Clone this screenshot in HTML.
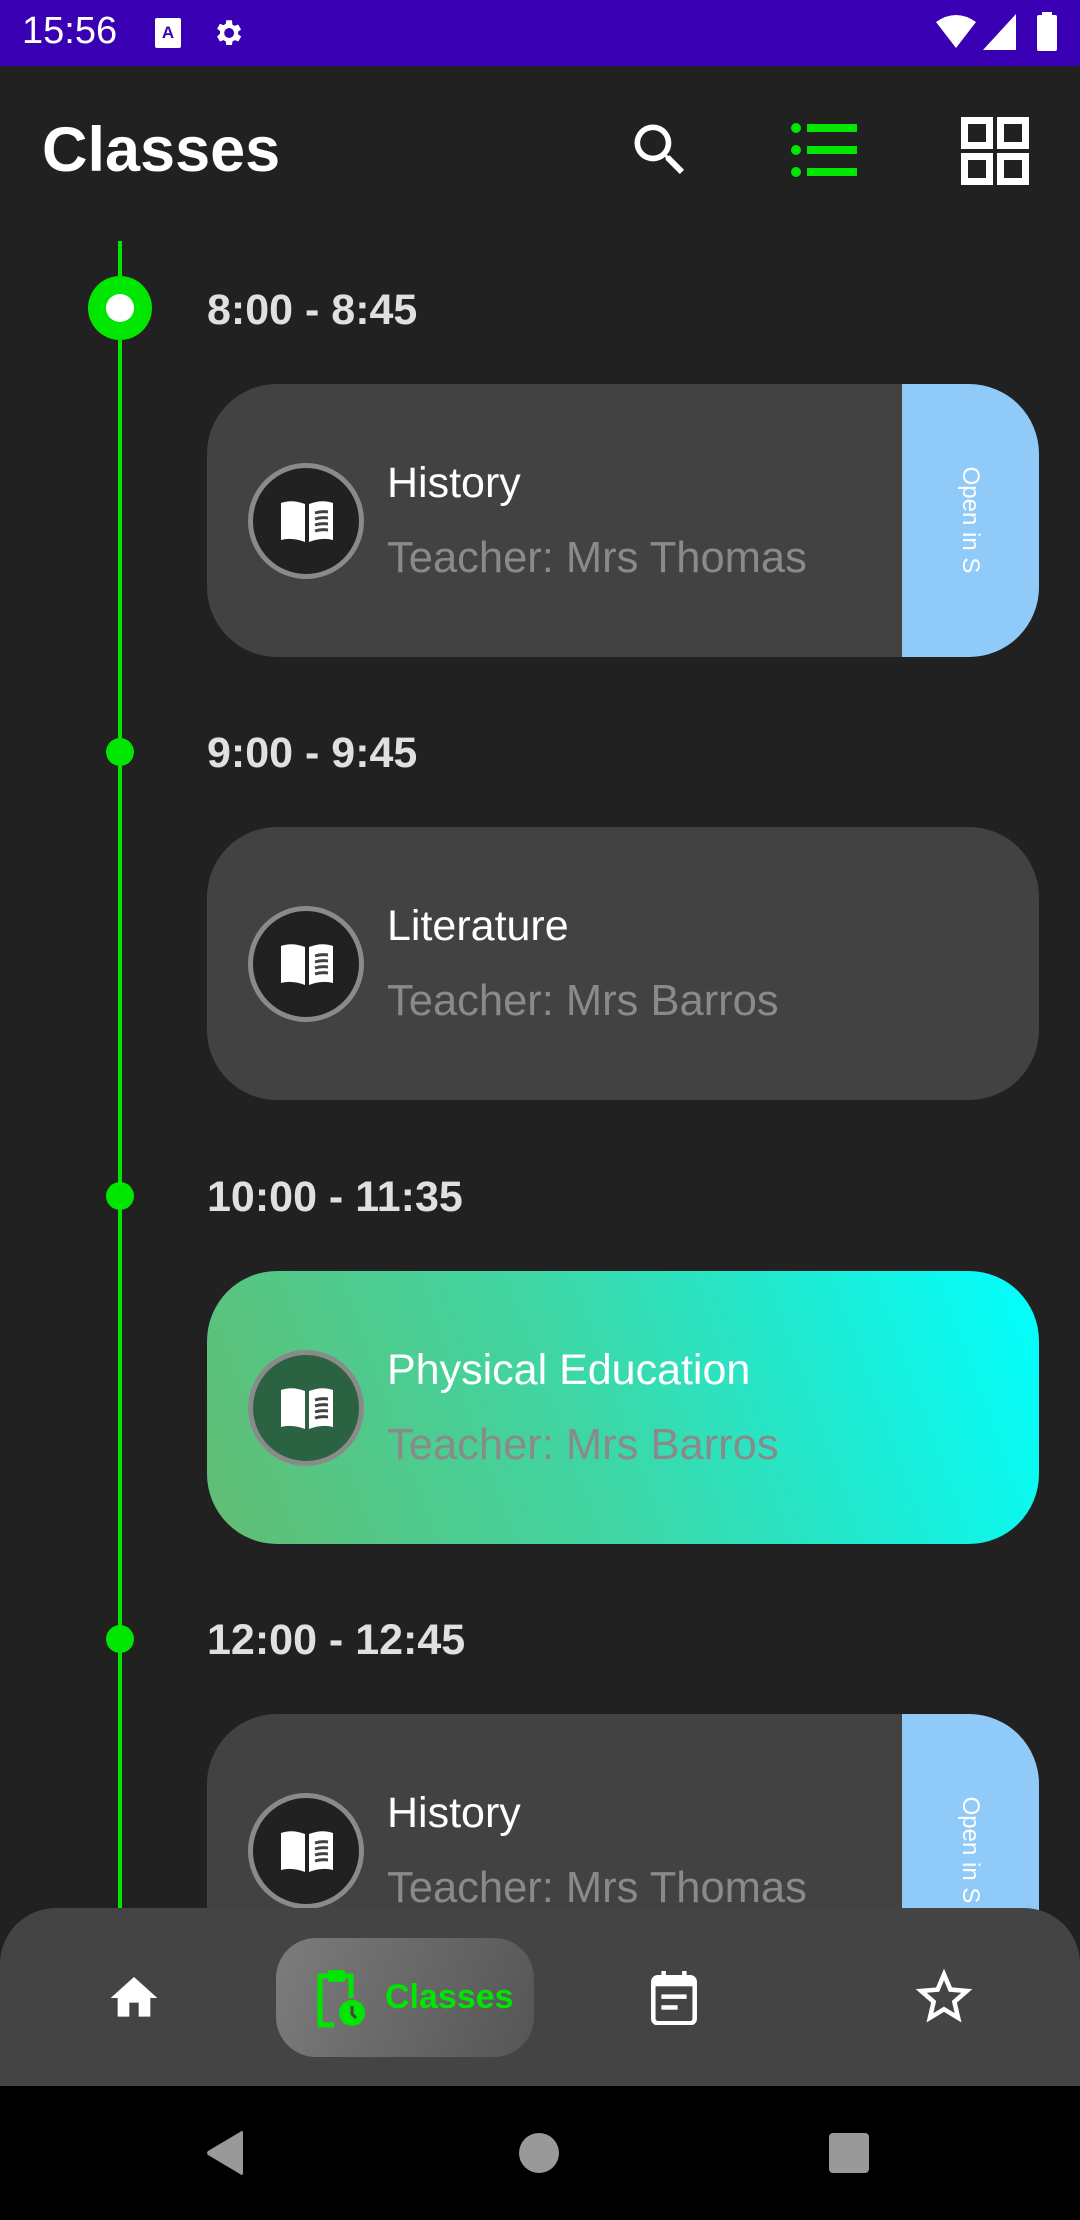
<!DOCTYPE html>
<html><head><meta charset="utf-8"><style>
*{margin:0;padding:0;box-sizing:border-box}
body{width:1080px;height:2220px;background:#212121;position:relative;overflow:hidden;font-family:"Liberation Sans",Roboto,sans-serif;color:#fff}
.abs{position:absolute}
.card{position:absolute;left:207px;width:832px;height:273px;border-radius:70px;background:#424242;overflow:hidden}
.circ{position:absolute;left:41px;top:79px;width:116px;height:116px;border-radius:50%;border:5px solid #8a8a8a;background:#212121}
.circ svg{position:absolute;left:26px;top:31px}
.ttl{position:absolute;left:180px;top:75px;font-size:43px;color:#fff;white-space:nowrap}
.sub{position:absolute;left:180px;top:150px;font-size:43.5px;color:#8a8a8a;white-space:nowrap}
.strip{position:absolute;left:695px;top:0;width:137px;height:273px;background:#90caf9}
.strip span{position:absolute;left:68px;top:136px;transform:translate(-50%,-50%) rotate(90deg);font-size:24px;white-space:nowrap;color:#fff}
.time{position:absolute;left:207px;font-size:43px;font-weight:bold;color:#e0e0e0}
.dot{position:absolute;left:106px;width:28px;height:28px;border-radius:50%;background:#00e600}
</style></head><body>
<div class="abs" style="left:0;top:0;width:1080px;height:66px;background:#3a00b4"></div>
<div class="abs" style="left:22px;top:10px;font-size:38px;color:#fff">15:56</div>
<svg class="abs" style="left:153px;top:17px" width="30" height="32" viewBox="0 0 30 32"><rect x="2" y="1" width="26" height="30" rx="2" fill="#fff"/><text x="15" y="21" font-size="17" font-weight="bold" text-anchor="middle" fill="#3a00b4" font-family="Liberation Sans">A</text></svg>
<svg class="abs" style="left:211px;top:16px" width="34" height="34" viewBox="0 0 24 24"><path fill="#fff" d="M19.1 12.9a7 7 0 000-1.8l2.1-1.6-2-3.5-2.5 1a7 7 0 00-1.6-.9L14.8 3h-4l-.4 2.6a7 7 0 00-1.6.9l-2.5-1-2 3.5 2.1 1.6a7 7 0 000 1.8L4.3 14.5l2 3.5 2.5-1a7 7 0 001.6.9l.4 2.6h4l.4-2.6a7 7 0 001.6-.9l2.5 1 2-3.5zM12.8 15.5a3.5 3.5 0 110-7 3.5 3.5 0 010 7z"/></svg>
<svg class="abs" style="left:935px;top:14px" width="42" height="36" viewBox="0 0 42 36"><path fill="#fff" d="M1 8Q21-6 41 8L21 34z"/></svg>
<svg class="abs" style="left:983px;top:14px" width="34" height="36" viewBox="0 0 34 36"><path fill="#fff" d="M33 0V36H0z"/></svg>
<svg class="abs" style="left:1036px;top:12px" width="22" height="40" viewBox="0 0 22 40"><rect x="6" y="0" width="10" height="4" fill="#fff"/><rect x="1" y="3" width="20" height="36" rx="2" fill="#fff"/></svg>

<div class="abs" style="left:42px;top:114px;font-size:63px;font-weight:bold;color:#fff">Classes</div>
<svg class="abs" style="left:626px;top:116px" width="68" height="68" viewBox="0 0 24 24"><path fill="#fff" d="M15.5 14h-.79l-.28-.27A6.47 6.47 0 0016 9.5 6.5 6.5 0 109.5 16c1.61 0 3.09-.59 4.23-1.57l.27.28v.79l5 4.99L20.49 19l-4.99-5zm-6 0C7.01 14 5 11.99 5 9.5S7.01 5 9.5 5 14 7.01 14 9.5 11.99 14 9.5 14z"/></svg>
<svg class="abs" style="left:791px;top:122px" width="68" height="56" viewBox="0 0 68 56"><g fill="#00e600"><circle cx="5" cy="6" r="5"/><circle cx="5" cy="28" r="5"/><circle cx="5" cy="50" r="5"/><rect x="16" y="2" width="50" height="8"/><rect x="16" y="24" width="50" height="8"/><rect x="16" y="46" width="50" height="8"/></g></svg>
<svg class="abs" style="left:961px;top:117px" width="68" height="68" viewBox="0 0 68 68"><g fill="none" stroke="#fff" stroke-width="7"><rect x="3.5" y="3.5" width="25" height="25"/><rect x="39.5" y="3.5" width="25" height="25"/><rect x="3.5" y="39.5" width="25" height="25"/><rect x="39.5" y="39.5" width="25" height="25"/></g></svg>

<div class="abs" style="left:118px;top:241px;width:4px;height:1700px;background:#00e600"></div>
<div class="abs" style="left:88px;top:276px;width:64px;height:64px;border-radius:50%;background:#00e600"></div>
<div class="abs" style="left:106px;top:294px;width:28px;height:28px;border-radius:50%;background:#fff"></div>
<div class="dot" style="top:738px"></div>
<div class="dot" style="top:1182px"></div>
<div class="dot" style="top:1625px"></div>

<div class="time" style="top:286px">8:00 - 8:45</div>
<div class="time" style="top:729px">9:00 - 9:45</div>
<div class="time" style="top:1173px">10:00 - 11:35</div>
<div class="time" style="top:1616px">12:00 - 12:45</div>

<svg width="0" height="0" style="position:absolute"><defs><symbol id="bk" viewBox="0 0 56 44"><path fill="#fff" d="M2 4Q13 0 26 5V43Q13 38 2 41z"/><path fill="#fff" d="M30 5Q43 0 54 4V41Q43 38 30 43z"/><g stroke="#424242" stroke-width="3" fill="none"><path d="M36 14Q42 12 49 13M36 20Q42 18 49 19M36 26Q42 24 49 25M36 32Q42 30 49 31"/></g></symbol></defs></svg>

<div class="card" style="top:384px">
<div class="circ"><svg width="56" height="44"><use href="#bk"/></svg></div>
<div class="ttl">History</div><div class="sub">Teacher: Mrs Thomas</div>
<div class="strip"><span>Open in S</span></div></div>

<div class="card" style="top:827px">
<div class="circ"><svg width="56" height="44"><use href="#bk"/></svg></div>
<div class="ttl">Literature</div><div class="sub">Teacher: Mrs Barros</div></div>

<div class="card" style="top:1271px;background:linear-gradient(70deg,#62bd72 0%,#3fd6a4 45%,#00ffff 100%)">
<div class="circ" style="background:#2b6242"><svg width="56" height="44"><use href="#bk"/></svg></div>
<div class="ttl">Physical Education</div><div class="sub">Teacher: Mrs Barros</div></div>

<div class="card" style="top:1714px">
<div class="circ"><svg width="56" height="44"><use href="#bk"/></svg></div>
<div class="ttl">History</div><div class="sub">Teacher: Mrs Thomas</div>
<div class="strip"><span>Open in S</span></div></div>

<div class="abs" style="left:0;top:1908px;width:1080px;height:180px;background:#444;border-radius:56px 56px 0 0"></div>
<div class="abs" style="left:276px;top:1938px;width:258px;height:119px;border-radius:40px;background:linear-gradient(110deg,#7c7c7c,#555)"></div>
<svg class="abs" style="left:106px;top:1970px" width="56" height="56" viewBox="0 0 24 24"><path fill="#fff" d="M10 20v-6h4v6h5v-8h3L12 3 2 12h3v8z"/></svg>
<svg class="abs" style="left:316px;top:1968px" width="50" height="60" viewBox="0 0 50 60"><g fill="none" stroke="#00e600" stroke-width="5"><path d="M14 8H4V57H18"/><path d="M27 8H35V30"/></g><rect x="12" y="2" width="17" height="12" rx="2" fill="#00e600"/><circle cx="36" cy="45" r="13" fill="#00e600"/><path d="M36 38V46L40 50" stroke="#444" stroke-width="3" fill="none"/></svg>
<div class="abs" style="left:385px;top:1978px;font-size:34px;font-weight:bold;color:#00e600">Classes</div>
<svg class="abs" style="left:650px;top:1971px" width="48" height="54" viewBox="0 0 52 60"><rect x="12" y="0" width="5" height="10" fill="#fff"/><rect x="35" y="0" width="5" height="10" fill="#fff"/><rect x="3" y="7" width="46" height="51" rx="5" fill="none" stroke="#fff" stroke-width="5"/><rect x="3" y="7" width="46" height="10" fill="#fff"/><rect x="12" y="26" width="28" height="5" fill="#fff"/><rect x="12" y="38" width="18" height="5" fill="#fff"/></svg>
<svg class="abs" style="left:910px;top:1963px" width="68" height="68" viewBox="0 0 24 24"><path fill="#fff" d="M22 9.24l-7.19-.62L12 2 9.19 8.63 2 9.24l5.46 4.73L5.82 21 12 17.27 18.18 21l-1.63-7.03L22 9.24zM12 15.4l-3.76 2.27 1-4.28-3.32-2.88 4.38-.38L12 6.1l1.71 4.04 4.38.38-3.32 2.88 1 4.28L12 15.4z"/></svg>

<div class="abs" style="left:0;top:2086px;width:1080px;height:134px;background:#000"></div>
<svg class="abs" style="left:205px;top:2130px" width="40" height="46" viewBox="0 0 40 46"><path fill="#999" d="M38 2V44Q37 46 35 44L3 25Q1 23 3 21L35 2Q37 0 38 2z"/></svg>
<div class="abs" style="left:519px;top:2133px;width:40px;height:40px;border-radius:50%;background:#999"></div>
<div class="abs" style="left:829px;top:2133px;width:40px;height:40px;border-radius:4px;background:#999"></div>
</body></html>
